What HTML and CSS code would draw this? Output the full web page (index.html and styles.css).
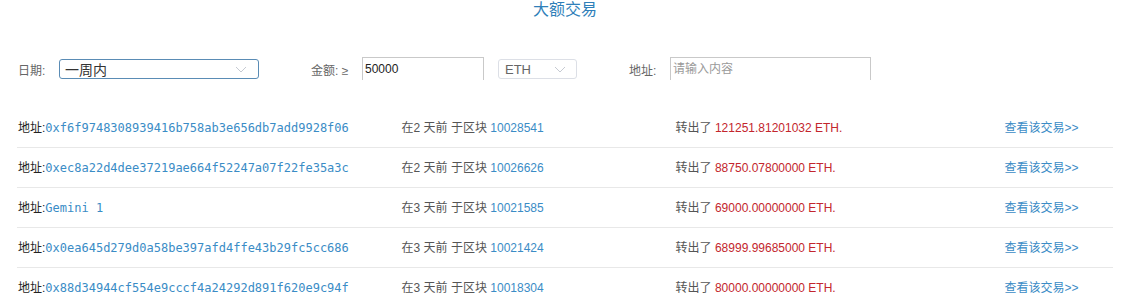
FILE: index.html
```html
<!DOCTYPE html>
<html lang="zh-CN">

<head>
    <meta charset="UTF-8">
    <title>大额交易</title>
    <link rel="stylesheet" href="styles.css">
</head>

<body>
    <div class="page">
        <h2 class="title">大额交易</h2>

        <div class="filters">
            <span class="label label-date">日期:</span>
            <div class="select select-date">
                <span>一周内</span>
                <svg class="chevron" width="12" height="7" viewBox="0 0 12 7"><polyline points="1,1 6,6 11,1" fill="none" stroke="#c6cad2" stroke-width="1"/></svg>
            </div>

            <span class="label label-amount">金额: ≥</span>
            <input class="input input-amount" type="text" value="50000">
            <div class="select select-coin">
                <span>ETH</span>
                <svg class="chevron" width="12" height="7" viewBox="0 0 12 7"><polyline points="1,1 6,6 11,1" fill="none" stroke="#c6cad2" stroke-width="1"/></svg>
            </div>

            <span class="label label-addr">地址:</span>
            <input class="input input-addr" type="text" placeholder="请输入内容">
        </div>

        <div class="list" id="list"></div>
    </div>

    <script>
        let txs = [
            { addr: "0xf6f9748308939416b758ab3e656db7add9928f06", days: 2, block: "10028541", amount: "121251.81201032" },
            { addr: "0xec8a22d4dee37219ae664f52247a07f22fe35a3c", days: 2, block: "10026626", amount: "88750.07800000" },
            { addr: "Gemini 1", days: 3, block: "10021585", amount: "69000.00000000" },
            { addr: "0x0ea645d279d0a58be397afd4ffe43b29fc5cc686", days: 3, block: "10021424", amount: "68999.99685000" },
            { addr: "0x88d34944cf554e9cccf4a24292d891f620e9c94f", days: 3, block: "10018304", amount: "80000.00000000" }
        ];

        let list = document.getElementById("list");
        txs.forEach(tx => {
            let row = document.createElement("div");
            row.className = "row";
            row.innerHTML =
                `<div class="cell">地址:<a class="addr">${tx.addr}</a></div>` +
                `<div class="cell muted">在${tx.days} 天前 于区块 <a class="link">${tx.block}</a></div>` +
                `<div class="cell muted">转出了 <span class="amount">${tx.amount} ETH.</span></div>` +
                `<div class="cell"><a class="link">查看该交易&gt;&gt;</a></div>`;
            list.appendChild(row);
        });
    </script>
</body>

</html>
```

FILE: styles.css
```css
body {
    margin: 0;
    background: #fff;
    font-family: "Liberation Sans", "Noto Sans CJK SC", sans-serif;
    font-size: 12px;
    color: #555;
}

.page {
    padding: 0 15px 0 17px;
}

.title {
    margin: 0;
    font-size: 16px;
    line-height: 20px;
    font-weight: normal;
    text-align: center;
    color: #2f7fb9;
}

.filters {
    display: flex;
    align-items: center;
    height: 24px;
    margin-top: 37px;
}

.label {
    display: inline-block;
    padding-left: 1px;
    color: #666;
    font-size: 12px;
}

.label-date {
    width: 41px;
}

.label-amount {
    width: 51px;
    margin-left: 51px;
}

.label-addr {
    width: 41px;
    margin-left: 51px;
}

.select {
    display: flex;
    align-items: center;
    justify-content: space-between;
    box-sizing: border-box;
    height: 20px;
    border-radius: 3px;
    background: #fff;
}

.select-date {
    width: 200px;
    border: 1px solid #5a8cb5;
    padding: 0 11px 0 5px;
    font-size: 14px;
    color: #333;
}

.select-coin {
    width: 79px;
    margin-left: 14px;
    border: 1px solid #dcdfe6;
    padding: 0 10px 0 6px;
    font-size: 13px;
    color: #666;
}

.input {
    box-sizing: border-box;
    height: 23px;
    margin: 0;
    padding: 0 2px;
    border: 1px solid #c9c9c9;
    border-bottom: none;
    outline: none;
    align-self: flex-start;
    font-family: "Liberation Sans", "Noto Sans CJK SC", sans-serif;
    font-size: 12px;
    color: #222;
}

.input::placeholder {
    color: #9a9a9a;
}

.input-amount {
    width: 122px;
}

.input-addr {
    width: 201px;
}

.list {
    margin-top: 27px;
}

.row {
    display: grid;
    grid-template-columns: 35% 25% 30% 10%;
    align-items: center;
    box-sizing: border-box;
    height: 40px;
    padding-bottom: 2px;
    border-bottom: 1px solid #e8e8e8;
}

.cell {
    padding-left: 1px;
    white-space: nowrap;
    color: #222;
}

.cell.muted {
    color: #555;
}

.addr {
    font-family: "DejaVu Sans Mono", monospace;
    font-size: 12px;
    color: #3a8cc6;
}

.link {
    color: #3a8cc6;
    cursor: pointer;
}

.amount {
    color: #c3262d;
}
```
